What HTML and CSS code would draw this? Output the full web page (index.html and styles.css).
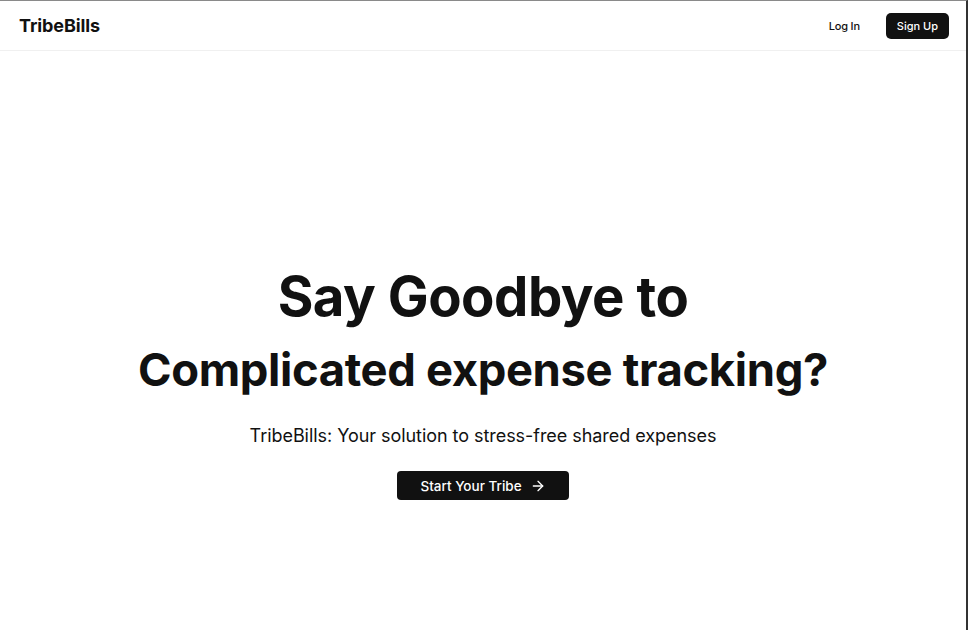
FILE: index.html
```html
<!DOCTYPE html>
<html lang="en">
<head>
<meta charset="utf-8">
<title>TribeBills</title>
<link rel="stylesheet" href="styles.css">
</head>
<body>
<div class="frame">
  <header class="nav">
    <div class="logo">TribeBills</div>
    <nav class="nav-actions">
      <a class="login" href="#">Log In</a>
      <a class="signup" href="#">Sign Up</a>
    </nav>
  </header>
  <main class="hero">
    <h1 class="title">Say Goodbye to</h1>
    <h2 class="subtitle">Complicated expense tracking?</h2>
    <p class="lead">TribeBills: Your solution to stress-free shared expenses</p>
    <a class="cta" href="#">Start Your Tribe
      <svg class="arrow" width="16" height="16" viewBox="0 0 24 24" fill="none" stroke="currentColor" stroke-width="2" stroke-linecap="round" stroke-linejoin="round"><path d="M5 12h14"/><path d="m12 5 7 7-7 7"/></svg>
    </a>
  </main>
</div>
</body>
</html>
```

FILE: styles.css
```css
* { box-sizing: border-box; }
html, body { margin: 0; padding: 0; background: #fff; }
body {
  font-family: Inter, "Noto Sans", "Liberation Sans", sans-serif;
  color: #111;
}
.frame {
  height: 630px;
  border-top: 1px solid #8a8a8a;
  border-right: 2px solid #333;
  display: flex;
  flex-direction: column;
}
.nav {
  height: 50px;
  display: flex;
  align-items: center;
  justify-content: space-between;
  padding: 0 17px 0 19px;
  border-bottom: 1px solid #f0f0f0;
}
.logo {
  font-size: 18px;
  font-weight: 700;
  letter-spacing: -0.1px;
}
.nav-actions {
  display: flex;
  align-items: center;
  gap: 26px;
}
.login, .signup {
  font-size: 11px;
  font-weight: 500;
  text-decoration: none;
  color: #111;
}
.login { letter-spacing: -0.2px; }
.signup {
  background: #111;
  color: #fff;
  padding: 0 11px;
  height: 26px;
  line-height: 26px;
  border-radius: 5px;
}
.hero {
  flex: 1;
  display: flex;
  flex-direction: column;
  align-items: center;
  padding-top: 209px;
}
.title {
  margin: 0;
  font-size: 54.5px;
  font-weight: 700;
  line-height: 72px;
  letter-spacing: -0.5px;
}
.subtitle {
  margin: 0;
  font-size: 45.4px;
  font-weight: 700;
  line-height: 76px;
  letter-spacing: -0.35px;
}
.lead {
  margin: 14px 0 0;
  font-size: 18px;
  font-weight: 400;
  line-height: 28px;
  letter-spacing: -0.05px;
}
.cta {
  margin-top: 21px;
  display: flex;
  align-items: center;
  gap: 8px;
  height: 29px;
  padding: 0 23px;
  background: #111;
  color: #fff;
  border-radius: 4px;
  font-size: 13.5px;
  font-weight: 500;
  text-decoration: none;
}
.arrow { display: block; }
```
